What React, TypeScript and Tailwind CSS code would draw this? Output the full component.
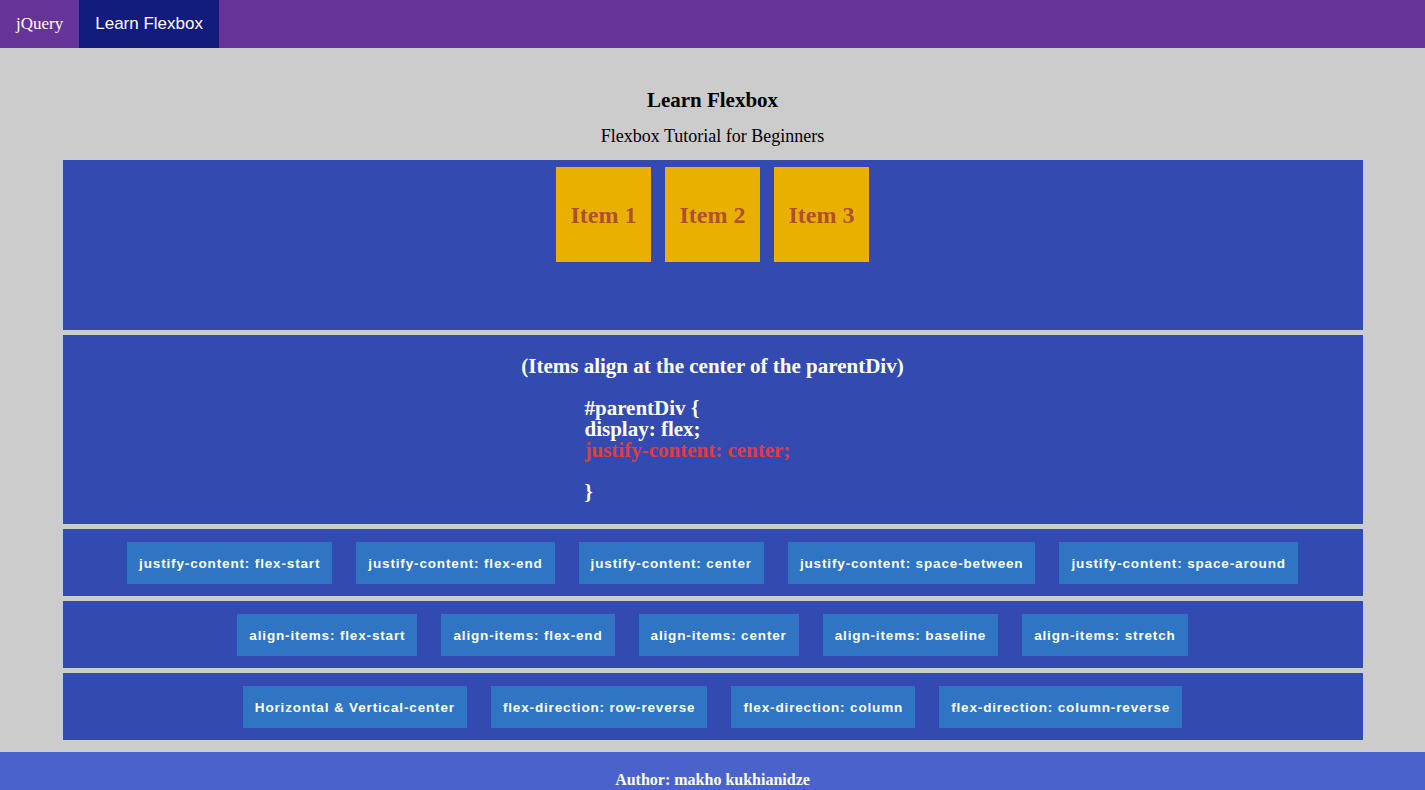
import React from "react";

const serif = "font-['Liberation_Serif','Times_New_Roman',serif]";
const sans = "font-['Liberation_Sans',Arial,sans-serif]";

function Btn({ label }: { label: string }) {
  return (
    <div
      className={`${sans} flex h-[42px] items-center bg-[#2f75c4] px-3 pt-[3px] text-[13.5px] font-bold tracking-[0.85px] text-white`}
    >
      {label}
    </div>
  );
}

function Row({ labels }: { labels: string[] }) {
  return (
    <div className="flex h-[67px] items-center justify-center gap-6 bg-[#334bb0]">
      {labels.map((l) => (
        <Btn key={l} label={l} />
      ))}
    </div>
  );
}

export default function App() {
  return (
    <div className="min-h-screen bg-[#cccccc]">
      <nav className="flex h-12 bg-[#663399] text-white">
        <div className={`${serif} flex items-center px-4 text-[17px]`}>jQuery</div>
        <div className={`${sans} flex items-center bg-[#111c7d] px-4 text-[17px]`}>Learn Flexbox</div>
      </nav>

      <div className="pt-10 text-center text-black">
        <h1 className={`${serif} text-[21px] font-bold leading-[24px]`}>Learn Flexbox</h1>
        <p className={`${serif} mt-[14px] text-[18px] leading-[20px]`}>Flexbox Tutorial for Beginners</p>
      </div>

      <div className="mx-auto mt-[14px] flex w-[1300px] flex-col gap-[5px]">
        <div className="flex h-[170px] items-start justify-center bg-[#334bb0] pt-[7px]">
          {["Item 1", "Item 2", "Item 3"].map((t) => (
            <div
              key={t}
              className={`${serif} mx-[7px] flex h-[95px] w-[95px] items-center justify-center bg-[#eab000] text-[24px] font-bold text-[#b0502a]`}
            >
              {t}
            </div>
          ))}
        </div>

        <div className={`${serif} h-[189px] bg-[#334bb0] pt-[19px] font-bold text-white`}>
          <p className="text-center text-[21px] leading-[24px]">(Items align at the center of the parentDiv)</p>
          <div className="mx-auto mt-[20px] w-[256px] text-left text-[21px] leading-[21px]">
            <div>#parentDiv {"{"}</div>
            <div>display: flex;</div>
            <div className="text-[#e03c3c]">justify-content: center;</div>
            <div>&nbsp;</div>
            <div>{"}"}</div>
          </div>
        </div>

        <Row
          labels={[
            "justify-content: flex-start",
            "justify-content: flex-end",
            "justify-content: center",
            "justify-content: space-between",
            "justify-content: space-around",
          ]}
        />
        <Row
          labels={[
            "align-items: flex-start",
            "align-items: flex-end",
            "align-items: center",
            "align-items: baseline",
            "align-items: stretch",
          ]}
        />
        <Row
          labels={[
            "Horizontal & Vertical-center",
            "flex-direction: row-reverse",
            "flex-direction: column",
            "flex-direction: column-reverse",
          ]}
        />
      </div>

      <footer
        className={`${serif} mt-3 bg-[#4a63cc] pb-[20px] pt-[19px] text-center text-[16px] font-bold leading-[18px] text-white`}
      >
        Author: makho kukhianidze
      </footer>
    </div>
  );
}
